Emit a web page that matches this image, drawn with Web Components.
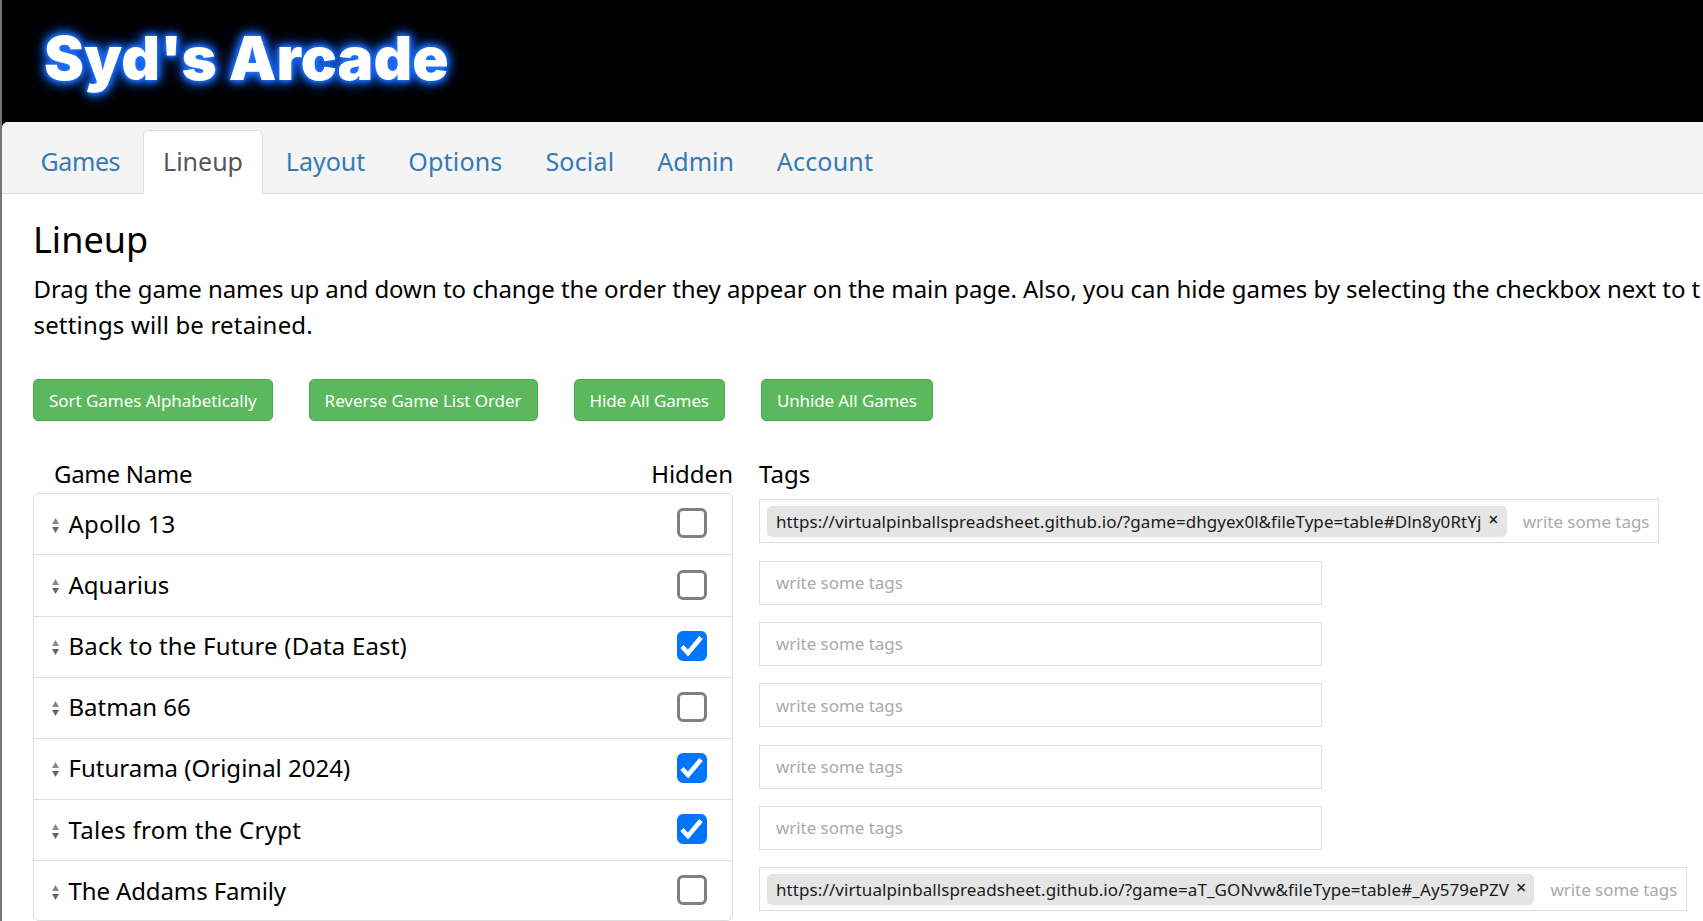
<!doctype html>
<html>
<head>
<meta charset="utf-8">
<title>Syd's Arcade</title>
<style>
  html, body { margin: 0; height: 100%; overflow: hidden; background: #000; }
  body { font-family: "Noto Sans", sans-serif; color: #000; }
</style>
</head>
<body>
<arcade-app>
  <arcade-banner slot="banner">Syd's Arcade</arcade-banner>
  <tab-bar slot="tabs">
    <tab-link style="letter-spacing:-0.4px">Games</tab-link>
    <tab-link active>Lineup</tab-link>
    <tab-link>Layout</tab-link>
    <tab-link style="letter-spacing:0.2px">Options</tab-link>
    <tab-link style="letter-spacing:0.2px">Social</tab-link>
    <tab-link>Admin</tab-link>
    <tab-link style="letter-spacing:0.2px">Account</tab-link>
  </tab-bar>
  <lineup-page>
    <action-button style="letter-spacing:-0.04px">Sort Games Alphabetically</action-button>
    <action-button style="letter-spacing:-0.05px">Reverse Game List Order</action-button>
    <action-button style="letter-spacing:-0.12px">Hide All Games</action-button>
    <action-button style="letter-spacing:-0.12px">Unhide All Games</action-button>

    <game-row slot="games" style="letter-spacing:0.2px">Apollo 13</game-row>
    <game-row slot="games">Aquarius</game-row>
    <game-row slot="games" checked style="letter-spacing:0.18px">Back to the Future (Data East)</game-row>
    <game-row slot="games">Batman 66</game-row>
    <game-row slot="games" checked>Futurama (Original 2024)</game-row>
    <game-row slot="games" checked style="letter-spacing:0.27px">Tales from the Crypt</game-row>
    <game-row slot="games" style="letter-spacing:-0.12px">The Addams Family</game-row>

    <tag-box slot="tags" style="letter-spacing:0.05px" tag="https://virtualpinballspreadsheet.github.io/?game=dhgyex0l&amp;fileType=table#Dln8y0RtYj"></tag-box>
    <tag-box slot="tags"></tag-box>
    <tag-box slot="tags"></tag-box>
    <tag-box slot="tags"></tag-box>
    <tag-box slot="tags"></tag-box>
    <tag-box slot="tags"></tag-box>
    <tag-box slot="tags" style="letter-spacing:0.09px" tag="https://virtualpinballspreadsheet.github.io/?game=aT_GONvw&amp;fileType=table#_Ay579ePZV"></tag-box>
  </lineup-page>
</arcade-app>

<script>
class ArcadeApp extends HTMLElement {
  constructor() {
    super();
    this.attachShadow({ mode: 'open' });
    this.shadowRoot.innerHTML = `
      <style>
        :host { display: block; height: 921px; border-left: 2px solid #757575; background: #000; overflow: hidden; }
        .panel { background: #fff; border-top-left-radius: 6px; height: 799px; overflow: hidden; }
      </style>
      <slot name="banner"></slot>
      <div class="panel">
        <slot name="tabs"></slot>
        <slot></slot>
      </div>
    `;
  }
}
customElements.define('arcade-app', ArcadeApp);

class ArcadeBanner extends HTMLElement {
  constructor() {
    super();
    this.attachShadow({ mode: 'open' });
    this.shadowRoot.innerHTML = `
      <style>
        :host { display: flex; align-items: center; height: 122px; padding-left: 42px; box-sizing: border-box; background: #000; }
        h1 {
          margin: 0 0 6px;
          font: 900 60px/1 Inter, "DejaVu Sans", sans-serif;
          color: #fff;
          letter-spacing: 0.05px;
          white-space: nowrap;
          text-shadow: 0 0 3px #1f70ff, 0 0 6px #1f70ff, 0 0 9px #1f70ff, 0 0 13px #1f70ff, 0 0 18px #0d50d0;
        }
      </style>
      <h1><slot></slot></h1>
    `;
  }
}
customElements.define('arcade-banner', ArcadeBanner);

class TabBar extends HTMLElement {
  constructor() {
    super();
    this.attachShadow({ mode: 'open' });
    this.shadowRoot.innerHTML = `
      <style>
        :host { display: flex; align-items: flex-end; gap: 3.5px; height: 72px; padding-left: 18.8px; box-sizing: border-box; background: #f4f4f4; border-bottom: 1px solid #d9d9d9; }
      </style>
      <slot></slot>
    `;
  }
}
customElements.define('tab-bar', TabBar);

class TabLink extends HTMLElement {
  constructor() {
    super();
    this.attachShadow({ mode: 'open' });
    this.shadowRoot.innerHTML = `
      <style>
        :host { display: block; height: 64px; margin-bottom: -1px; padding: 0 18.7px; box-sizing: border-box; border: 1px solid transparent; border-bottom: 0; border-radius: 5px 5px 0 0; font-size: 25px; line-height: 60px; color: #337ab7; }
        :host([active]) { background: #fff; border-color: #ddd; color: #555; }
      </style>
      <slot></slot>
    `;
  }
}
customElements.define('tab-link', TabLink);

class LineupPage extends HTMLElement {
  constructor() {
    super();
    this.attachShadow({ mode: 'open' });
    this.shadowRoot.innerHTML = `
      <style>
        :host { display: block; padding: 22px 0 0 31px; }
        h2 { margin: 0 0 6.5px; font-size: 36px; font-weight: 400; line-height: 48px; }
        p { margin: 0 0 0 0.5px; font-size: 24px; line-height: 36.4px; white-space: nowrap; letter-spacing: -0.05px; }
        p span { letter-spacing: 0.17px; }
        .actions { display: flex; gap: 36px; margin-top: 36px; }
        .table { display: grid; grid-template-columns: 700px 1fr; column-gap: 26px; margin-top: 35px; }
        .head { display: flex; justify-content: space-between; height: 37px; font-size: 24px; line-height: 36px; }
        .head .first { padding-left: 21px; letter-spacing: -0.3px; }
        .list { border: 1px solid #ddd; border-radius: 6px; height: 428px; box-sizing: border-box; overflow: hidden; }
        .tags { padding-top: 6px; }
      </style>
      <h2>Lineup</h2>
      <p>Drag the game names up and down to change the order they appear on the main page. Also, you can hide games by selecting the checkbox next to t<br><span>settings will be retained.</span></p>
      <div class="actions"><slot></slot></div>
      <div class="table">
        <div class="head"><span class="first">Game Name</span><span>Hidden</span></div>
        <div class="head"><span>Tags</span></div>
        <div class="list"><slot name="games"></slot></div>
        <div class="tags"><slot name="tags"></slot></div>
      </div>
    `;
  }
}
customElements.define('lineup-page', LineupPage);

class ActionButton extends HTMLElement {
  constructor() {
    super();
    this.attachShadow({ mode: 'open' });
    this.shadowRoot.innerHTML = `
      <style>
        :host { display: block; height: 42px; padding: 0 15px; box-sizing: border-box; background: #5cb85c; border: 1px solid #4cae4c; border-radius: 5px; color: #fff; font-size: 17px; line-height: 41px; white-space: nowrap; }
      </style>
      <slot></slot>
    `;
  }
}
customElements.define('action-button', ActionButton);

class GameRow extends HTMLElement {
  constructor() {
    super();
    this.attachShadow({ mode: 'open' });
    this.shadowRoot.innerHTML = `
      <style>
        :host { display: flex; align-items: center; height: 61.15px; box-sizing: border-box; padding: 0 25px 0 18px; border-bottom: 1px solid #ddd; font-size: 24px; }
        :host(:last-child) { border-bottom: 0; }
        svg.grip { width: 7px; height: 15px; margin-right: 9.5px; margin-top: 2px; flex: none; }
        .name { flex: 1; margin-bottom: 2px; }
        hide-check { margin-bottom: 2px; }
      </style>
      <svg class="grip" viewBox="0 0 7 15"><path d="M3.5 0L7 6H0z" fill="#888"/><path d="M0 9h7L3.5 15z" fill="#666"/></svg>
      <span class="name"><slot></slot></span>
      <hide-check ${this.hasAttribute('checked') ? 'checked' : ''}></hide-check>
    `;
  }
}
customElements.define('game-row', GameRow);

class HideCheck extends HTMLElement {
  constructor() {
    super();
    this.attachShadow({ mode: 'open' });
    this.shadowRoot.innerHTML = `
      <style>
        :host { display: block; width: 30px; height: 30px; box-sizing: border-box; border: 3px solid #7f7f7f; border-radius: 6px; background: #fff; }
        :host([checked]) { background: #0075ff; border-color: #0075ff; }
        svg { display: none; width: 30px; height: 30px; margin: -3px; }
        :host([checked]) svg { display: block; }
      </style>
      <svg viewBox="0 0 30 30"><path d="M5 15.5l6 6.5L24 6.5" fill="none" stroke="#fff" stroke-width="4.6"/></svg>
    `;
  }
}
customElements.define('hide-check', HideCheck);

class TagBox extends HTMLElement {
  constructor() {
    super();
    this.attachShadow({ mode: 'open' });
    const tag = this.getAttribute('tag');
    this.shadowRoot.innerHTML = `
      <style>
        :host { display: flex; width: fit-content; min-width: 563px; height: 44px; margin-bottom: 17.3px; box-sizing: border-box; padding: 0 1px 0 7px; align-items: center; background: #fff; border: 1px solid #ddd; font-size: 17px; white-space: nowrap; }
        .chip { display: flex; align-items: center; height: 31px; padding: 0 8px 0 9px; margin-right: 7px; background: #e5e5e5; border-radius: 5px; color: #1a1a1a; }
        .x { margin-left: 7px; font-size: 18px; font-weight: 500; line-height: 1; position: relative; top: -2px; }
        .ph { padding: 0 8px 0 9px; color: #aaa; letter-spacing: -0.05px; }
      </style>
      ${tag ? `<span class="chip"><span>${tag.replace(/&/g, '&amp;')}</span><span class="x">×</span></span>` : ''}
      <span class="ph">write some tags</span>
    `;
  }
}
customElements.define('tag-box', TagBox);
</script>
</body>
</html>
